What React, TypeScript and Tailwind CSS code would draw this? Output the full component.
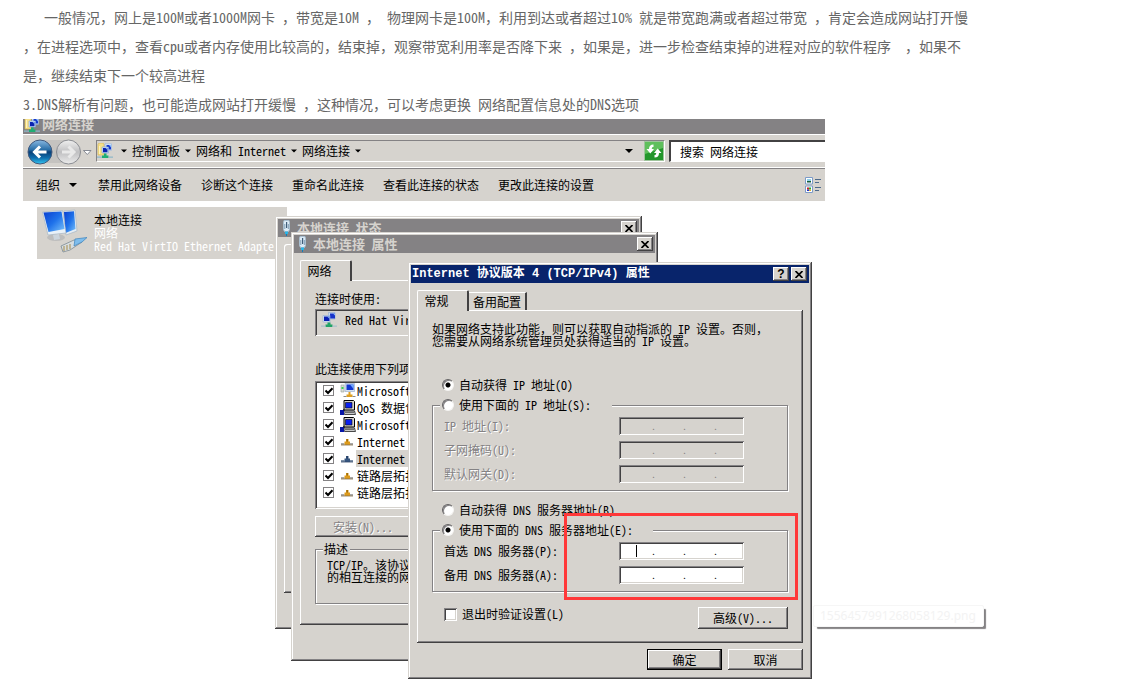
import React, { useId } from "react";

const raised =
  "bg-[#d6d3ce] shadow-[inset_-1px_-1px_0_#424142,inset_1px_1px_0_#fff,inset_-2px_-2px_0_#848284]";
const windowFrame =
  "bg-[#d6d3ce] shadow-[inset_-1px_-1px_0_#424142,inset_1px_1px_0_#d6d3ce,inset_-2px_-2px_0_#848284,inset_2px_2px_0_#fff]";
const sunken =
  "shadow-[inset_1px_1px_0_#848284,inset_-1px_-1px_0_#fff,inset_2px_2px_0_#424142,inset_-2px_-2px_0_#d6d3ce]";
const etched = "border border-[#848284] shadow-[inset_1px_1px_0_#fff,1px_1px_0_#fff]";
const disabledText = "text-[#848284] [text-shadow:1px_1px_0_#fff]";

function NetIcon() {
  return (
    <svg viewBox="0 0 16 16" className="size-4 shrink-0" aria-hidden="true">
      <path d="M7.500 .5h6.500v6.500H7.500z" fill="#c8dcf4" stroke="#8fa9d0" strokeWidth=".6" />
      <path d="M9 1.500h5v5H9z" fill="#1733c8" />
      <path d="M12 1.500h2v2z" fill="#8cc0ff" />
      <path d="M2 3.500h7v6.500H2z" fill="#dbe8f8" stroke="#8fa9d0" strokeWidth=".6" />
      <path d="M3 4.500h5.500V9H3z" fill="#0a1fb4" />
      <path d="M6 4.500h2.500v2.300z" fill="#7fb2f5" />
      <path d="M6.500 10.500h3v2h2V15H4.500v-2.500h2z" fill="#21a366" />
      <path d="M0 13.500h4.500v1.200H0zM11.500 13.500H16v1.200h-4.500z" fill="#a9bfcc" />
    </svg>
  );
}

function FolderNetIcon() {
  return (
    <svg viewBox="0 0 16 16" className="size-4 shrink-0" aria-hidden="true">
      <path d="M1 1.500L2 0h4l1 1.500V12H1z" fill="#f6e08a" stroke="#d4b24c" strokeWidth=".6" />
      <path d="M2.500 3v8" stroke="#fdf3c2" />
      <path d="M8 .8h6.500v6.500H8z" fill="#d7e5f8" stroke="#8faedb" strokeWidth=".6" />
      <path d="M9.500 2h4.500v4.500H9.500z" fill="#1538cc" />
      <path d="M12 2h2v2.500z" fill="#8cc0ff" />
      <path d="M5 4h6.500v6H5z" fill="#cfe0f6" stroke="#7aa0d8" strokeWidth=".6" />
      <path d="M6 5h4.500v4.200H6z" fill="#0b22b0" />
      <path d="M8.500 5h2v2z" fill="#7db4f5" />
      <path d="M7 10.500h2.500v2h2V15H5v-2.500h2z" fill="#1fae74" />
      <path d="M0 13.500h5v1.200H0zM11.500 13.500H16v1.200h-4.500z" fill="#8fb8c8" />
    </svg>
  );
}

function PlugIcon() {
  return (
    <svg viewBox="0 0 16 16" className="size-4 shrink-0" aria-hidden="true">
      <path d="M5 .5h5l.5 2v7l-1 2H5.500l-1-2v-7z" fill="#dcebf6" stroke="#a8bfd0" />
      <path d="M7 2h1.200v6H7z" fill="#3f5c78" />
      <path d="M5.800 4v5M9.300 4v5" stroke="#7f9db5" />
      <path d="M6 11.500h3V14H6z" fill="#29b6e8" />
      <path d="M7 14h1v2H7z" fill="#0a7fc0" />
    </svg>
  );
}

function ClientIcon() {
  return (
    <svg viewBox="0 0 16 16" className="size-4 shrink-0" aria-hidden="true">
      <path d="M1 2h3v7H1z" fill="#d8dcd8" stroke="#9ca39c" strokeWidth=".6" />
      <path d="M1.500 4h2v2h-2z" fill="#39d353" />
      <path d="M5 .5h9.500v8H5z" fill="#d5e2f2" stroke="#9db0cc" strokeWidth=".7" />
      <path d="M6.500 1.500h7v5.500h-7z" fill="#1236d0" />
      <path d="M10 1.500h3.500V6z" fill="#6ea8ff" />
      <path d="M8.500 9h2v2.500h2V14h-6v-2.500h2z" fill="#e0a020" />
      <path d="M3.500 13h3v1h-3zM12.500 13h3v1h-3z" fill="#8a8a8a" />
    </svg>
  );
}

function ServiceIcon() {
  return (
    <svg viewBox="0 0 16 16" className="size-4 shrink-0" aria-hidden="true">
      <path d="M4 .5h9.500l1 1v8.500H4z" fill="#d6d3ce" stroke="#000" />
      <path d="M5.500 2.500h6.500V8H5.500z" fill="#0a20f0" stroke="#000" strokeWidth=".6" />
      <path d="M3.500 11h11l1 3.500h-11z" fill="#c9c9c9" stroke="#222" strokeWidth=".8" />
      <path d="M5 12.500h9" stroke="#555" strokeWidth=".8" />
      <path d="M0 10h4v5H0z" fill="#0716a8" />
      <path d="M3 9.500l1.500 1" stroke="#000" />
    </svg>
  );
}

function ProtocolIcon({ blue = false }: { blue?: boolean }) {
  return (
    <svg viewBox="0 0 16 16" className="size-4 shrink-0" aria-hidden="true">
      <path d="M1 9h3.500v2H1zM10 9h3v2h-3z" fill={blue ? "#7d90a8" : "#a9a9a9"} />
      <path d="M6 5h2.500v2.500H10V11H4.500V7.500H6z" fill={blue ? "#35557f" : "#dd9a1a"} />
      <path d="M1 11h12" stroke={blue ? "#30486b" : "#85704a"} strokeWidth=".8" />
      <path d="M7.200 5v2.500" stroke={blue ? "#1c3050" : "#6b4a08"} strokeWidth=".8" />
    </svg>
  );
}

function Caret({ className = "w-[6px]" }: { className?: string }) {
  return (
    <svg viewBox="0 0 8 4" className={`h-1 shrink-0 ${className}`} aria-hidden="true">
      <path d="M0 0h8L4 4z" fill="#000" />
    </svg>
  );
}

function TitleButton({ kind }: { kind: "close" | "help" }) {
  return (
    <button
      type="button"
      aria-label={kind === "close" ? "关闭" : "帮助"}
      className={`flex h-[14px] w-4 items-center justify-center ${raised}`}
    >
      {kind === "close" ? (
        <svg viewBox="0 0 8 7" className="h-[7px] w-2" aria-hidden="true">
          <path d="M.5 0L7.500 7M7.500 0L.5 7" stroke="#000" strokeWidth="1.700" />
        </svg>
      ) : (
        <span className="font-['Liberation_Sans',sans-serif] text-[12px] leading-[14px] font-bold">?</span>
      )}
    </button>
  );
}

function Check({ label, marked = false }: { label?: string; marked?: boolean }) {
  return (
    <span className="grid shrink-0 place-items-center">
      <input
        type="checkbox"
        aria-label={label}
        defaultChecked={marked}
        className={
          "appearance-none bg-white [grid-area:1/1] " +
          (marked ? "size-[11px] border border-[#848284]" : `size-[13px] ${sunken}`)
        }
      />
      {marked && (
        <svg viewBox="0 0 8 8" className="pointer-events-none size-2 [grid-area:1/1]" aria-hidden="true">
          <path d="M.5 3.500L3 6 7.500 1.200" fill="none" stroke="#000" strokeWidth="2" />
        </svg>
      )}
    </span>
  );
}

function RadioRow({
  name,
  checked = false,
  children,
}: {
  name: string;
  checked?: boolean;
  children: React.ReactNode;
}) {
  return (
    <label className="flex h-4 items-center gap-[5px] whitespace-pre">
      <input
        type="radio"
        name={name}
        defaultChecked={checked}
        className="size-3 shrink-0 appearance-none rounded-full border border-t-[#636163] border-r-[#f4f3f1] border-b-[#f4f3f1] border-l-[#636163] bg-white shadow-[inset_1px_1px_0_#848284] checked:bg-[radial-gradient(circle,#000_2px,#fff_3px)]"
      />
      {children}
    </label>
  );
}

function IpRow({ label, disabled = false, focused = false }: { label: string; disabled?: boolean; focused?: boolean }) {
  const id = useId();
  return (
    <div className="flex h-[18px] items-center">
      <label htmlFor={id} className={`w-[175px] whitespace-pre ${disabled ? disabledText : ""}`}>
        {label}
      </label>
      <div
        className={`relative flex h-[18px] w-[125px] items-center pl-[5px] ${sunken} ${disabled ? "text-[#848284]" : "bg-white"}`}
      >
        {[0, 1, 2, 3].map((n) => (
          <React.Fragment key={n}>
            <input
              id={n === 0 ? id : undefined}
              aria-label={n === 0 ? undefined : `${label} ${n + 1}`}
              disabled={disabled}
              maxLength={3}
              className={`h-3 bg-transparent text-center outline-none ${n === 3 ? "w-5" : "w-[27px]"}`}
            />
            {n < 3 && <span className="w-1 text-center text-[10px] leading-3">.</span>}
          </React.Fragment>
        ))}
        {focused && <span className="absolute top-[3px] left-[17px] h-3 w-px bg-black" />}
      </div>
    </div>
  );
}

const components = [
  { icon: <ClientIcon />, text: "Microsoft" },
  { icon: <ServiceIcon />, text: "QoS 数据包" },
  { icon: <ServiceIcon />, text: "Microsoft" },
  { icon: <ProtocolIcon />, text: "Internet" },
  { icon: <ProtocolIcon blue />, text: "Internet", selected: true },
  { icon: <ProtocolIcon />, text: "链路层拓扑" },
  { icon: <ProtocolIcon />, text: "链路层拓扑" },
];

const commands = ["禁用此网络设备", "诊断这个连接", "重命名此连接", "查看此连接的状态", "更改此连接的设置"];

function Explorer() {
  return (
    <div className="w-full max-w-[802px] overflow-hidden">
      <div className="flex h-[14px] items-end gap-[2px] overflow-hidden bg-[#848284] pl-px text-[13px] leading-[14px] font-bold text-[#d6d3ce]">
        <FolderNetIcon />
        <span className="pb-[2px]">网络连接</span>
      </div>
      <div className="flex h-[36px] items-center border-t border-b border-[#848284] bg-[#d6d3ce] pl-1 shadow-[inset_0_1px_0_#fff,inset_0_-1px_0_#fff]">
        <svg viewBox="0 0 66 28" className="h-7 w-[66px] shrink-0" role="img" aria-label="后退 前进">
          <defs>
            <linearGradient id="back" x1="0" y1="0" x2="0" y2="1">
              <stop offset="0" stopColor="#8ab9e2" />
              <stop offset=".4" stopColor="#2b6fa8" />
              <stop offset=".5" stopColor="#0a4078" />
              <stop offset=".75" stopColor="#0f6fae" />
              <stop offset="1" stopColor="#35c8f4" />
            </linearGradient>
            <linearGradient id="fwd" x1="0" y1="0" x2="0" y2="1">
              <stop offset="0" stopColor="#f0f0f0" />
              <stop offset=".5" stopColor="#bfbfc1" />
              <stop offset="1" stopColor="#ececec" />
            </linearGradient>
          </defs>
          <path d="M13 3h28v23H13z" fill="#c5c3c0" />
          <circle cx="13" cy="15" r="12" fill="url(#back)" stroke="#42597c" />
          <path d="M19.500 15H8M13 9.500L7.500 15l5.500 5.500" fill="none" stroke="#fff" strokeWidth="3" />
          <circle cx="41.500" cy="15" r="12" fill="url(#fwd)" stroke="#8b8d92" />
          <path d="M35 15h11.500M41.500 9.500L47 15l-5.500 5.500" fill="none" stroke="#e9e9e9" strokeWidth="3" />
          <path d="M56.500 13.500h7.500l-3.700 4z" fill="#fff" stroke="#6f7480" strokeWidth=".8" />
        </svg>
        <div className="ml-[3px] flex h-[22px] min-w-0 flex-1 items-center border border-t-[#848284] border-r-white border-b-white border-l-[#848284] whitespace-pre">
          <FolderNetIcon />
          <span className="ml-[8px] flex items-center gap-[5px]">
            <Caret />
            控制面板
            <Caret />
            网络和 Internet
            <Caret />
            网络连接
            <Caret />
          </span>
          <span className="ml-auto flex items-center gap-[11px]">
            <Caret className="w-2" />
            <button type="button" aria-label="刷新" className="size-5">
              <svg viewBox="0 0 20 20" className="size-5" aria-hidden="true">
                <path d="M.5 .5h19v19H.5z" fill="#23962b" stroke="#9fc49c" />
                <path d="M1 1h18v6L1 13z" fill="#5fbf5c" />
                <path d="M9.500 3.500C6.500 3.500 5 5 5 8H2.500L6.300 12.500 10 8H7.800C7.800 6.500 8.300 6 9.500 6z" fill="#fff" />
                <path d="M10.500 16.500c3 0 4.500-1.500 4.500-4.500h2.500L13.700 7.500 10 12h2.200c0 1.500-.5 2-1.700 2z" fill="#fff" />
              </svg>
            </button>
          </span>
        </div>
        <input
          aria-label="搜索"
          defaultValue="搜索 网络连接"
          className="ml-1 h-[22px] w-[156px] shrink-0 border-t-2 border-b border-l-2 border-t-[#424142] border-b-white border-l-[#424142] bg-white pl-[9px] outline-none"
        />
      </div>
      <div className="flex h-8 items-center gap-[19px] bg-[#d6d3ce] pr-1 pl-[13px]">
        <button type="button" className="flex items-center gap-[9px] pr-[2px]">
          组织
          <Caret className="w-2" />
        </button>
        {commands.map((c) => (
          <button key={c} type="button" className="shrink-0">
            {c}
          </button>
        ))}
        <svg viewBox="0 0 16 16" className="ml-auto size-4 shrink-0" aria-hidden="true">
          <path d="M.5 .5h7v6.500h-7zM.5 9h7v6.500h-7z" fill="#fff" stroke="#7c9bc8" />
          <path d="M2 2h4v2H2z" fill="#8fd0e8" />
          <path d="M2 4h4v1.500H2z" fill="#165a3a" />
          <path d="M2 10.500h2v2H2z" fill="#c22" />
          <path d="M4 10.500h2v2H4z" fill="#2a3" />
          <path d="M2 12.500h2V14H2z" fill="#23c" />
          <path d="M4 12.500h2V14H4z" fill="#da2" />
          <path d="M10 2.500h6M10 5.500h4M10 10.500h6M10 13.500h4" stroke="#4d6a8c" />
        </svg>
      </div>
      <div className="pt-[6px] pl-[14px]">
        <div className="flex h-[52px] w-[250px] overflow-hidden bg-[#d6d3ce] pl-[5px]">
          <svg viewBox="0 0 48 48" className="mt-[2px] size-12 shrink-0" aria-hidden="true">
            <defs>
              <linearGradient id="scr" x1="0" y1="0" x2="1" y2="1">
                <stop offset="0" stopColor="#0a3fd0" />
                <stop offset=".5" stopColor="#1f72ea" />
                <stop offset="1" stopColor="#7cc4fb" />
              </linearGradient>
            </defs>
            <ellipse cx="14" cy="28.500" rx="9" ry="3.500" fill="#bdbdbd" />
            <path d="M22 2l11-1 2 21-11 4z" fill="#e6eef5" stroke="#a8b6c4" strokeWidth=".7" />
            <path d="M22 3l10-.8L33.500 20l-10 4z" fill="url(#scr)" />
            <path d="M.5 3l20-1.500L24 24 6 26z" fill="#e9f1f8" stroke="#a8b6c4" strokeWidth=".7" />
            <path d="M1.500 3.500l18-1L22.500 20 6.500 23z" fill="url(#scr)" />
            <path d="M11 26l6-1 1 5-6 1z" fill="#ccd5dd" />
            <path d="M19 37l13-6 8 2-12 8-7 2z" fill="#d7dde0" stroke="#7e8a92" strokeWidth=".8" />
            <path d="M22 37v5M25 36v5M28 35v5" stroke="#a58b4a" />
            <path d="M33 30l12-1.500-5 4.500-8 4z" fill="#7fbdec" stroke="#3c83bb" strokeWidth=".7" />
          </svg>
          <div className="ml-[4px] pt-[6px] leading-[13px] whitespace-pre text-white">
            <div className="text-black">本地连接</div>
            <div>网络</div>
            <div>Red Hat VirtIO Ethernet Adapte</div>
          </div>
        </div>
      </div>
    </div>
  );
}

function StatusWindow() {
  return (
    <section
      aria-label="本地连接 状态"
      className={`absolute top-[97px] left-[252px] w-[367px] p-[3px] pb-9 ${windowFrame}`}
    >
      <header className="flex h-[18px] items-center bg-[#848284] pr-[2px] pl-px text-[13px] font-bold text-[#d6d3ce]">
        <PlugIcon />
        <h2 className="ml-[2px] flex-1 whitespace-pre">本地连接 状态</h2>
        <TitleButton kind="close" />
      </header>
      <div className={`mx-[6px] mt-[7px] h-[349px] rounded-tl-[3px] ${raised}`} />
    </section>
  );
}

function PropertiesWindow() {
  return (
    <section
      aria-label="本地连接 属性"
      className={`absolute top-[113px] left-[268px] w-[367px] p-[3px] pb-9 ${windowFrame}`}
    >
      <header className="flex h-[18px] items-center bg-[#848284] pr-[2px] pl-px text-[13px] font-bold text-[#d6d3ce]">
        <PlugIcon />
        <h2 className="ml-[2px] flex-1 whitespace-pre">本地连接 属性</h2>
        <TitleButton kind="close" />
      </header>
      <div className="px-[6px] pt-[7px]">
        <button
          type="button"
          className="relative z-10 -mb-px block h-[21px] w-[52px] rounded-t-[2px] border-t border-r-2 border-l border-t-white border-r-[#424142] border-l-white bg-[#d6d3ce] pr-3 text-center"
        >
          网络
        </button>
        <div className={`px-[15px] pt-[11px] pb-[21px] ${raised}`}>
          <p className="h-4 leading-4">连接时使用:</p>
          <div
            className={`mt-[2px] flex h-[27px] items-center overflow-hidden pb-[5px] pl-[6px] whitespace-pre ${sunken}`}
          >
            <NetIcon />
            <span className="ml-2">Red Hat Vir</span>
          </div>
          <p className="mt-[25px] h-4 leading-4">此连接使用下列项</p>
          <ul className={`mt-1 h-[128px] overflow-hidden bg-white py-px pl-2 ${sunken}`}>
            {components.map((c, i) => (
              <li key={i} className="flex h-[17px] items-center whitespace-pre">
                <Check label={c.text} marked />
                <span className="ml-[6px]">{c.icon}</span>
                <span
                  className={`h-[17px] flex-1 overflow-hidden pl-px leading-[17px] ${c.selected ? "bg-[#d6d3ce]" : ""}`}
                >
                  {c.text}
                </span>
              </li>
            ))}
          </ul>
          <button type="button" disabled className={`mt-[7px] block h-[21px] w-[96px] ${raised} ${disabledText}`}>
            安装(N)...
          </button>
          <fieldset className={`mt-1 h-[63px] px-[11px] ${etched}`}>
            <legend className="-ml-1 h-4 bg-[#d6d3ce] pr-[2px] pl-px leading-4">描述</legend>
            <p className="pt-[2px] leading-3">
              TCP/IP。该协议
              <br />
              的相互连接的网
            </p>
          </fieldset>
        </div>
      </div>
    </section>
  );
}

function Ipv4Window() {
  return (
    <section
      aria-label="Internet 协议版本 4 (TCP/IPv4) 属性"
      className={`absolute top-[143px] left-[385px] w-[404px] p-[3px] pb-[9px] ${windowFrame}`}
    >
      <header className="flex h-[18px] items-center gap-[2px] bg-[#08246b] pr-[2px] pl-px text-white">
        <h2 className="flex-1 font-['Liberation_Mono','Noto_Sans_CJK_SC',monospace] font-bold whitespace-pre">
          Internet 协议版本 4 (TCP/IPv4) 属性
        </h2>
        <span className="flex gap-[2px] text-black">
          <TitleButton kind="help" />
          <TitleButton kind="close" />
        </span>
      </header>
      <div className="px-[6px] pt-[7px]">
        <div className="-mb-px flex items-end">
          <button
            type="button"
            className="relative z-10 h-[21px] w-[52px] rounded-t-[2px] border-t border-r-2 border-l border-t-white border-r-[#424142] border-l-white bg-[#d6d3ce] pr-3 text-center"
          >
            常规
          </button>
          <button
            type="button"
            className="mb-px h-[18px] w-[58px] border-t border-r-2 border-t-white border-r-[#424142] text-center"
          >
            备用配置
          </button>
        </div>
        <div className={`px-[15px] pt-[13px] pb-[14px] ${raised}`}>
          <p className="leading-3 whitespace-pre">
            如果网络支持此功能，则可以获取自动指派的 IP 设置。否则，
            <br />
            您需要从网络系统管理员处获得适当的 IP 设置。
          </p>
          <div className="mt-[30px] pl-[10px]">
            <RadioRow name="ip" checked>
              自动获得 IP 地址(O)
            </RadioRow>
          </div>
          <fieldset className={`mt-1 px-[11px] pt-1 pb-[7px] ${etched}`}>
            <legend className="-ml-1 w-[172px] bg-[#d6d3ce] pl-[2px]">
              <RadioRow name="ip">使用下面的 IP 地址(S):</RadioRow>
            </legend>
            <div className="flex flex-col gap-[6px]">
              <IpRow label="IP 地址(I):" disabled />
              <IpRow label="子网掩码(U):" disabled />
              <IpRow label="默认网关(D):" disabled />
            </div>
          </fieldset>
          <div className="mt-[11px] pl-[10px]">
            <RadioRow name="dns">自动获得 DNS 服务器地址(B)</RadioRow>
          </div>
          <fieldset className={`mt-1 px-[11px] pt-1 pb-[7px] ${etched}`}>
            <legend className="-ml-1 w-[213px] bg-[#d6d3ce] pl-[2px]">
              <RadioRow name="dns" checked>
                使用下面的 DNS 服务器地址(E):
              </RadioRow>
            </legend>
            <div className="flex flex-col gap-[6px]">
              <IpRow label="首选 DNS 服务器(P):" focused />
              <IpRow label="备用 DNS 服务器(A):" />
            </div>
          </fieldset>
          <div className="mt-[15px] flex items-start justify-between">
            <label className="flex h-[14px] items-center gap-[5px] pl-3">
              <Check />
              退出时验证设置(L)
            </label>
            <button type="button" className={`h-[22px] w-[90px] ${raised}`}>
              高级(V)...
            </button>
          </div>
        </div>
        <div className="mt-[6px] flex justify-end gap-[6px]">
          <button
            type="button"
            className="h-[21px] w-[75px] border border-black bg-[#d6d3ce] shadow-[inset_-1px_-1px_0_#424142,inset_1px_1px_0_#fff,inset_-2px_-2px_0_#848284]"
          >
            确定
          </button>
          <button type="button" className={`h-[21px] w-[75px] ${raised}`}>
            取消
          </button>
        </div>
      </div>
    </section>
  );
}

export default function App() {
  return (
    <main className="min-h-screen overflow-x-hidden bg-white px-[23px] pt-[3px] font-['Noto_Sans_Mono_CJK_SC','Noto_Sans_CJK_SC',monospace] text-[12px] leading-4 text-black">
      <p className="text-[14px] leading-[29px] whitespace-pre text-[#666]">
        {"   一般情况，网上是100M或者1000M网卡 ，带宽是10M ， 物理网卡是100M，利用到达或者超过10% 就是带宽跑满或者超过带宽 ，肯定会造成网站打开慢"}
        <br />
        {"，在进程选项中，查看cpu或者内存使用比较高的，结束掉，观察带宽利用率是否降下来 ，如果是，进一步检查结束掉的进程对应的软件程序  ，如果不"}
        <br />
        是，继续结束下一个较高进程
        <br />
        3.DNS解析有问题，也可能造成网站打开缓慢 ，这种情况，可以考虑更换 网络配置信息处的DNS选项
      </p>
      <div className="relative min-h-[568px]">
        <Explorer />
        <StatusWindow />
        <PropertiesWindow />
        <Ipv4Window />
        <div className="pointer-events-none absolute top-[394px] left-[541px] h-[87px] w-[234px] border-3 border-[#ff3839]" />
        <div className="absolute top-[486px] left-[790px] rounded-[2px] border border-[#f6f6f6] bg-white py-[2px] pr-[7px] pl-[6px] font-['Noto_Sans',sans-serif] text-[12px] leading-4 text-[#f3f3f3] shadow-[3px_3px_1px_-1px_#848284]">
          1556457991268058129.png
        </div>
      </div>
    </main>
  );
}
